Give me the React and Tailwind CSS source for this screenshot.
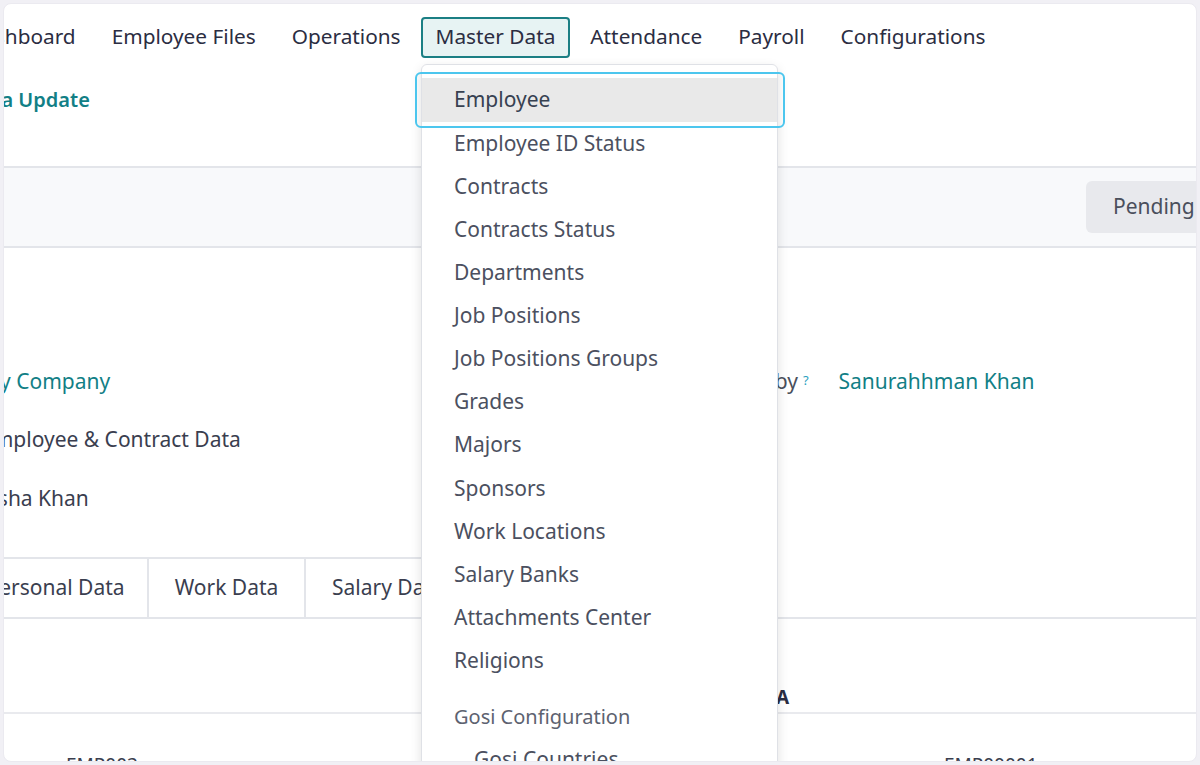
import React from "react";

const navItems = ["Dashboard", "Employee Files", "Operations", "Master Data", "Attendance", "Payroll", "Configurations"];

const menuItems = [
  "Employee",
  "Employee ID Status",
  "Contracts",
  "Contracts Status",
  "Departments",
  "Job Positions",
  "Job Positions Groups",
  "Grades",
  "Majors",
  "Sponsors",
  "Work Locations",
  "Salary Banks",
  "Attachments Center",
  "Religions",
];

export default function App() {
  return (
    <div
      className="w-[1200px] h-[765px] bg-[#f1f0f5] p-[3px]"
      style={{ fontFamily: '"Noto Sans", "Open Sans", sans-serif' }}
    >
      <div className="relative h-full w-full overflow-hidden rounded-[8px] bg-white border border-[#ebeaf0]">
        {/* top nav */}
        <div className="flex items-center h-[64px] pt-[2px] -ml-[52px] gap-[4px]">
          {navItems.map((n) =>
            n === "Master Data" ? (
              <div
                key={n}
                className="h-[41px] flex items-center px-[13px] rounded-[4px] border-2 border-[#1b7f84] bg-[#e7f3f3] text-[20.8px] text-[#2b2d42]"
              >
                {n}
              </div>
            ) : (
              <div key={n} className="h-[41px] flex items-center px-[16px] text-[20.8px] text-[#2b2d42]">
                {n}
              </div>
            )
          )}
        </div>
        {/* breadcrumb/title row */}
        <div className="h-[100px] border-b-2 border-[#e3e5ea] flex items-start">
          <div className="-ml-[37px] mt-[17px] text-[20px] font-semibold text-[#127f86]">Data Update</div>
        </div>
        {/* status bar */}
        <div className="h-[80px] bg-[#f8f9fb] border-b-2 border-[#e3e5ea] flex items-center justify-end">
          <div className="h-[52px] w-[120px] -mr-[10px] rounded-[6px] bg-[#e8e9ed] flex items-center pl-[27px] text-[21px] text-[#4a4f5c]">
            Pending
          </div>
        </div>
        {/* form body */}
        <div className="flex pt-[122px]">
          <div className="w-[700px] -ml-[23px] flex flex-col gap-[36px] text-[21px]">
            <div className="text-[#127f86] leading-[22px]">My Company</div>
            <div className="text-[#3a3e4f] leading-[22px] ml-[1px]">Employee &amp; Contract Data</div>
            <div className="text-[#3a3e4f] leading-[22px] -ml-[2px] mt-[1px]">Aisha Khan</div>
          </div>
          <div className="flex items-start gap-[30px] text-[21px] -ml-[7px]">
            <div className="text-[#4a4f5c] leading-[22px] relative">
              Approved by<sup className="text-[#2a9fc0] text-[13px] ml-[5px] relative -top-[4px]">?</sup>
            </div>
            <div className="text-[#127f86] leading-[22px]">Sanurahhman Khan</div>
          </div>
        </div>
        {/* tabs */}
        <div className="mt-[48px] flex border-b-2 border-[#e3e5ea] h-[62px]">
          <div className="-ml-[40px] w-[185px] border-t-2 border-r-2 border-[#e3e5ea] flex items-center justify-center text-[21px] text-[#3a3e4f]">
            Personal Data
          </div>
          <div className="w-[157px] border-t-2 border-r-2 border-[#e3e5ea] flex items-center justify-center text-[21px] text-[#3a3e4f]">
            Work Data
          </div>
          <div className="w-[157px] border-t-2 border-r-2 border-[#e3e5ea] flex items-center justify-start pl-[26px] text-[21px] text-[#3a3e4f]">
            Salary Data
          </div>
        </div>
        {/* table header */}
        <div className="h-[95px] border-b-2 border-[#e9eaee] flex items-end pb-[1px]">
          <div className="ml-[737px] text-[19px] font-bold text-[#2b2d42]">DATA</div>
        </div>
        <div className="flex pt-[37px] text-[19px] text-[#3a3e4f]">
          <div className="ml-[62px]">EMP003</div>
          <div className="ml-[806px]">EMP00001</div>
        </div>

        {/* dropdown */}
        <div className="absolute left-[417px] top-[60px] w-[357px] h-[720px] bg-white border border-[#dfe1e6] rounded-[6px] shadow-[0_4px_12px_rgba(0,0,0,0.12)] pt-[13px]">
          {menuItems.map((m, i) =>
            i === 0 ? (
              <div key={m} className="relative h-[44px] bg-[#e9e9e9] flex items-center pl-[32px] text-[21px] text-[#374151]">
                <div className="absolute -left-[7px] -right-[8px] -top-[6px] -bottom-[6px] rounded-[6px] border-[2px] border-[#4cc6ee]"></div>
                {m}
              </div>
            ) : (
              <div key={m} className="h-[43.1px] flex items-center pl-[32px] text-[21px] text-[#4b5060]">
                {m}
              </div>
            )
          )}
          <div className="h-[13px]"></div>
          <div className="h-[43px] flex items-center pl-[32px] text-[20px] text-[#5d6270]">Gosi Configuration</div>
          <div className="h-[43px] flex items-center pl-[52px] text-[21px] text-[#4b5060]">Gosi Countries</div>
        </div>
      </div>
    </div>
  );
}
